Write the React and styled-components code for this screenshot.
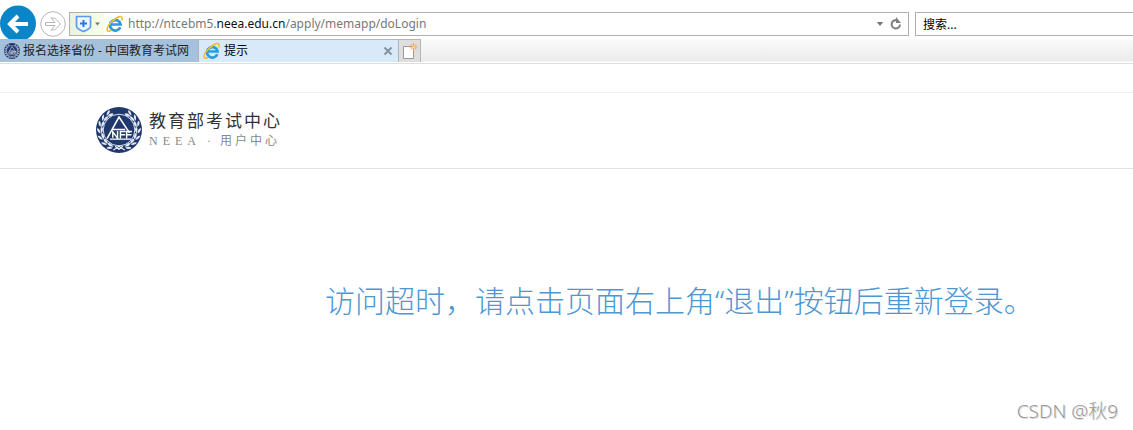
import React, { useState } from "react"
import styled, { createGlobalStyle } from "styled-components"

const GlobalStyle = createGlobalStyle`
  * {
    box-sizing: border-box;
  }

  body {
    margin: 0;
    background: #fff;
    color: #000;
    font-family: "Noto Sans", "Noto Sans CJK SC", sans-serif;
    font-size: 12px;
  }

  button, input {
    font: inherit;
    color: inherit;
  }
`;

const IconButton = styled.button`
  display: flex;
  flex: none;
  align-items: center;
  justify-content: center;
  padding: 0;
  border: 0;
  background: none;
`;

// Browser toolbar
const Toolbar = styled.div`
  display: flex;
  align-items: flex-start;
  height: 39px;
  padding-top: 5px;
  overflow: hidden;
`;

const BackButton = styled(IconButton)`
  width: 36px;
  height: 37px;
`;

const ForwardButton = styled(IconButton)`
  width: 26px;
  height: 26px;
  margin: 6px 3px 0 4px;
`;

const AddressBar = styled.form`
  display: flex;
  flex: 1;
  align-items: center;
  height: 24px;
  margin-top: 7px;
  padding-right: 4px;
  border: 1px solid #b0b0b0;
`;

const ShieldButton = styled(IconButton)`
  gap: 3px;
  width: 34px;
  height: 22px;
  background: linear-gradient(to right, #eaf3dd, #f6ffe6);
`;

const IconSlot = styled.span`
  display: flex;
  margin-left: 2px;
`;

const Url = styled.a`
  flex: 1;
  margin-left: 4px;
  color: #777;
  font-size: 12px;
  line-height: 22px;
  text-decoration: none;
  white-space: nowrap;

  b {
    color: #111;
    font-weight: 400;
  }
`;

const DropButton = styled(IconButton)`
  width: 16px;
  height: 22px;
`;

const SearchInput = styled.input`
  width: 218px;
  height: 24px;
  margin: 7px 0 0 6px;
  padding: 0 7px;
  border: 1px solid #b0b0b0;
  border-right: 0;
  border-radius: 0;
  outline: 0;

  &::placeholder {
    color: #000;
    opacity: 1;
  }
`;

// Tab strip
const TabStrip = styled.nav`
  display: flex;
  height: 25px;
  padding-bottom: 1px;
  border-bottom: 1px solid #dedede;
  background: linear-gradient(#fbfbfb, #ebebeb 22px, #fff 23px);
`;

const Tab = styled.div`
  display: flex;
  align-items: center;
  width: ${props => props.$width}px;
  height: 23px;
  padding: 0 5px 0 4px;
  border-top: 1px solid #b4b9bd;
  border-right: 1px solid #a9b4bd;
  background: ${props => (props.$active ? "#d8eafa" : "#a5c1dc")};
`;

const TabLink = styled.a`
  display: flex;
  flex: 1;
  align-items: center;
  gap: 3px;
  color: ${props => (props.$active ? "#000" : "#222")};
  line-height: 22px;
  text-decoration: none;
  white-space: nowrap;
`;

const NewTab = styled(IconButton)`
  width: 22px;
  height: 23px;
  border: 1px solid #b5b5b5;
  border-width: 1px 1px 0 0;
  background: #dedede;
`;

// Page
const TopBar = styled.div`
  height: 29px;
  border-bottom: 1px solid #f0f0f0;
`;

const Header = styled.header`
  display: flex;
  align-items: center;
  gap: 7px;
  height: 76px;
  padding: 0 0 1px 96px;
  border-bottom: 1px solid #e2e2e2;
`;

const Brand = styled.div`
  display: flex;
  flex-direction: column;
`;

const BrandName = styled.span`
  color: #333;
  font-size: 17px;
  line-height: 22px;
  letter-spacing: 2px;
`;

const BrandSub = styled.span`
  color: #888;
  font-family: "Liberation Serif", "Noto Sans CJK SC", serif;
  font-size: 12px;
  line-height: 18px;
  letter-spacing: 3px;
`;

const Latin = styled.span`
  letter-spacing: 5px;
`;

const Main = styled.main`
  padding: 110px 20px 0 325px;
`;

const Message = styled.h1`
  margin: 0;
  color: #4f97d2;
  font-size: 30px;
  font-weight: 300;
  line-height: 44px;
`;

const Watermark = styled.div`
  position: absolute;
  right: 15px;
  bottom: 6px;
  color: #999;
  font-size: 19px;
  font-weight: 300;
  line-height: 26px;
  text-shadow: 1px 1px 0 #ddd;
`;

const BackIcon = () => (
  <svg width="36" height="37" viewBox="0 0 36 37" aria-hidden="true">
    <circle cx="18" cy="18.5" r="18" fill="#0a85c7" />
    <path d="M28 19H10M18 11l-8 8 8 8" fill="none" stroke="#fff" strokeWidth="4" />
  </svg>
)

const ForwardIcon = () => (
  <svg width="26" height="26" viewBox="0 0 26 26" fill="none" stroke="#b5b5b5" aria-hidden="true">
    <circle cx="13" cy="13" r="12.3" />
    <path d="M5.500 11.500h9.500l-4-4.500h3.500l6 6-6 6H11l4-4.500H5.500z" />
  </svg>
)

const ShieldIcon = () => (
  <svg width="17" height="18" viewBox="0 0 17 18" fill="none" aria-hidden="true">
    <path d="M1.500 1.500h14v10q0 2-7 5-7-3-7-5z" fill="#eef7ff" stroke="#5a9cec" strokeWidth="1.700" strokeLinejoin="round" />
    <path d="M8.500 5v7M5 8.500h7" stroke="#2478e5" strokeWidth="2" />
  </svg>
)

const Caret = ({ width = 5 }) => (
  <svg width={width} height="4" viewBox="0 0 8 5" aria-hidden="true">
    <path d="M0 0h8L4 5z" fill="#777" />
  </svg>
)

const IeIcon = () => (
  <svg width="18" height="18" viewBox="0 0 18 18" fill="none" aria-hidden="true">
    <path d="M14.300 12.300A5.300 5.300 0 1 1 14.600 9.500H5" stroke="#2b9be0" strokeWidth="2.700" />
    <path d="M4.500 8Q6 5.300 9.200 4.800" stroke="#8bd2f7" strokeWidth="1" />
    <path d="M4.500 15.500C-.5 18.500 0 12 6 6.500S17.500-.5 16 5" stroke="#f2bd2c" strokeWidth="1.600" strokeLinecap="round" />
  </svg>
)

const RefreshIcon = () => (
  <svg width="12" height="14" viewBox="0 0 12 14" fill="none" aria-hidden="true">
    <path d="M7.500 3.500A4.200 4.200 0 1 0 10 7.500" stroke="#808080" strokeWidth="2" />
    <path d="M6 0v6h5z" fill="#808080" />
  </svg>
)

const CloseIcon = () => (
  <svg width="10" height="10" viewBox="0 0 10 10" aria-hidden="true">
    <path d="M1.500 1.500l7 7M8.500 1.500l-7 7" stroke="#84909b" strokeWidth="1.900" />
  </svg>
)

const NewTabIcon = () => (
  <svg width="16" height="17" viewBox="0 0 16 17" aria-hidden="true">
    <path d="M1.500 3.500h10v12h-10z" fill="#fff" stroke="#999" />
    <path d="M11.500 0v8M7.500 4h8M8.700 1.200l5.600 5.600M14.300 1.200L8.700 6.800" stroke="#eda044" />
    <circle cx="11.500" cy="4" r="1.500" fill="#ffd27c" />
  </svg>
)

const leaves = [10, 30, 50, 70, 90, 110, 130]

// Round emblem: laurel ring around a tall triangle and the NEE strokes
const Emblem = ({ size }) => (
  <svg width={size} height={size} viewBox="0 0 48 48" fill="none" stroke="#fff" aria-hidden="true">
    <circle cx="24" cy="24" r="24" fill="#20386c" stroke="none" />
    {[1, -1].map(side => (
      <g key={side} transform={side === 1 ? undefined : "translate(48 0) scale(-1 1)"}>
        {leaves.map(angle => (
          <g key={angle} transform={`rotate(${angle + 28} 24 24)`}>
            <path d="M25 4.500q-5.500 0-6-3 4-.5 6 3zM25 5.500q-4 3.500-7 1.200 2.500-3 7-1.200z" fill="#e4eaf5" stroke="none" />
          </g>
        ))}
      </g>
    ))}
    <circle cx="24" cy="24" r="16.500" strokeWidth="1" stroke="#dfe6f2" />
    <path d="M11.500 33L24 10.500 35 27M17.500 23.500h13" strokeWidth="1.600" />
    <path d="M14.500 33.500h22M17.500 32v-6l5 6.500V25M31 25.500h-5.500v7M25.500 29h5M37.500 25.500H32v7M32 29h5" strokeWidth="1.500" />
    <path d="M18 45l6-4 6 4M20 41l4 3 4-3" strokeWidth="1.200" />
  </svg>
)

function BrowserBar() {
  const [keyword, setKeyword] = useState("")

  return (
    <Toolbar>
      <BackButton aria-label="后退"><BackIcon /></BackButton>
      <ForwardButton aria-label="前进"><ForwardIcon /></ForwardButton>
      <AddressBar onSubmit={e => e.preventDefault()}>
        <ShieldButton type="button" aria-label="安全">
          <ShieldIcon />
          <Caret />
        </ShieldButton>
        <IconSlot><IeIcon /></IconSlot>
        <Url href="#">http://ntcebm5.<b>neea.edu.cn</b>/apply/memapp/doLogin</Url>
        <DropButton type="button" aria-label="历史记录"><Caret width={8} /></DropButton>
        <DropButton type="submit" aria-label="刷新"><RefreshIcon /></DropButton>
      </AddressBar>
      <SearchInput
        aria-label="搜索"
        placeholder="搜索..."
        value={keyword}
        onChange={e => setKeyword(e.target.value)}
      />
    </Toolbar>
  )
}

function App() {
  return (
    <>
      <GlobalStyle />
      <BrowserBar />
      <TabStrip>
        <Tab $width={199}>
          <TabLink href="#"><Emblem size={16} />报名选择省份 - 中国教育考试网</TabLink>
        </Tab>
        <Tab $width={200} $active>
          <TabLink href="#" $active><IeIcon />提示</TabLink>
          <IconButton aria-label="关闭"><CloseIcon /></IconButton>
        </Tab>
        <NewTab aria-label="新建标签页"><NewTabIcon /></NewTab>
      </TabStrip>

      <TopBar />
      <Header>
        <Emblem size={46} />
        <Brand>
          <BrandName>教育部考试中心</BrandName>
          <BrandSub><Latin>NEEA</Latin> · 用户中心</BrandSub>
        </Brand>
      </Header>
      <Main>
        <Message>访问超时，请点击页面右上角“退出”按钮后重新登录。</Message>
      </Main>
      <Watermark>CSDN @秋9</Watermark>
    </>
  )
}

export default App
